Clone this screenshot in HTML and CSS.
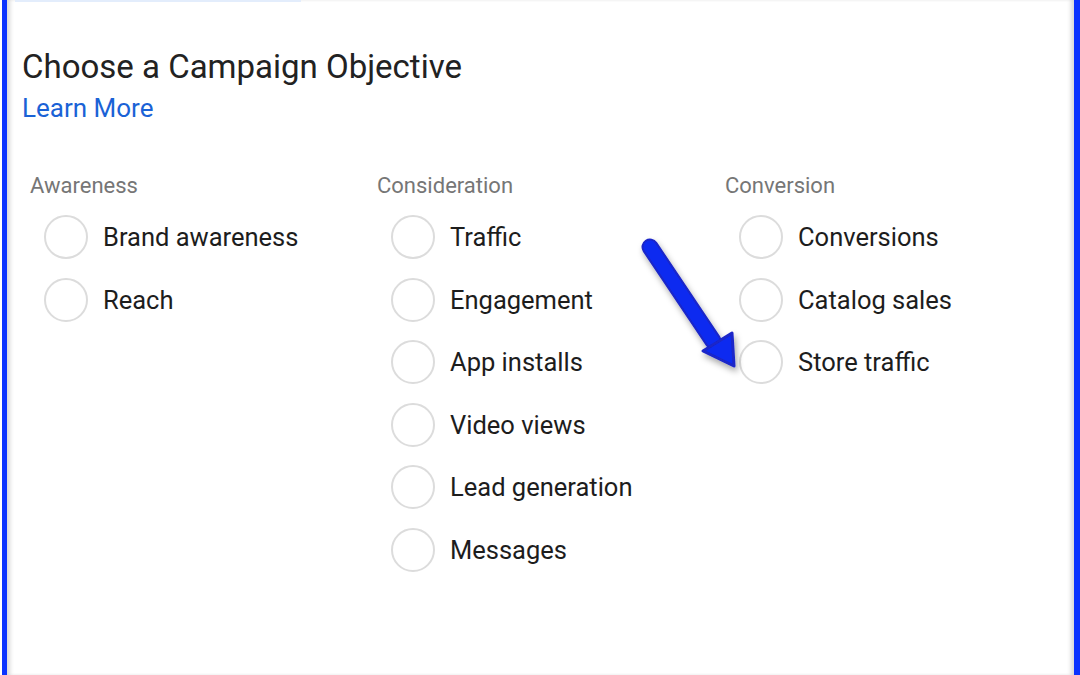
FILE: index.html
```html
<!DOCTYPE html>
<html lang="en">
<head>
    <meta charset="UTF-8">
    <title>Choose a Campaign Objective</title>
    <link rel="stylesheet" href="styles.css">
</head>
<body>
    <div class="frame">
        <div class="top-tab"></div>
        <div class="panel">
            <h2>Choose a Campaign Objective</h2>
            <a class="learn-more" href="#">Learn More</a>

            <div class="columns">
                <div class="column">
                    <div class="column-title">Awareness</div>
                    <label class="option"><span class="radio"></span>Brand awareness</label>
                    <label class="option"><span class="radio"></span>Reach</label>
                </div>
                <div class="column">
                    <div class="column-title">Consideration</div>
                    <label class="option"><span class="radio"></span>Traffic</label>
                    <label class="option"><span class="radio"></span>Engagement</label>
                    <label class="option"><span class="radio"></span>App installs</label>
                    <label class="option"><span class="radio"></span>Video views</label>
                    <label class="option"><span class="radio"></span>Lead generation</label>
                    <label class="option"><span class="radio"></span>Messages</label>
                </div>
                <div class="column">
                    <div class="column-title">Conversion</div>
                    <label class="option"><span class="radio"></span>Conversions</label>
                    <label class="option"><span class="radio"></span>Catalog sales</label>
                    <label class="option"><span class="radio"></span>Store traffic</label>
                </div>
            </div>
        </div>

        <!-- annotation arrow pointing at Store traffic -->
        <svg class="arrow" width="120" height="150" viewBox="0 0 120 150">
            <defs>
                <filter id="shadow" x="-30%" y="-30%" width="160%" height="160%">
                    <feDropShadow dx="2" dy="4" stdDeviation="3" flood-color="#000" flood-opacity="0.35"/>
                </filter>
            </defs>
            <g filter="url(#shadow)">
                <line x1="17" y1="14" x2="80" y2="108" stroke="#1a25c8" stroke-width="17" stroke-linecap="round"/>
                <line x1="17" y1="14" x2="80" y2="108" stroke="#0a2cf0" stroke-width="13" stroke-linecap="round"/>
                <path d="M70 118 L99 100 L101 133 Z" fill="#0a2cf0" stroke="#1a25c8" stroke-width="3" stroke-linejoin="round"/>
            </g>
        </svg>
    </div>
</body>
</html>
```

FILE: styles.css
```css
body {
    margin: 0;
    background: #fff;
    font-family: Roboto, "Liberation Sans", sans-serif;
    color: #1d1d1d;
}
.frame {
    position: relative;
    height: 675px;
    margin-left: 2px;
    border-left: 5px solid #0b33ff;
    border-right: 6px solid #0b33ff;
    box-shadow: inset 5px 0 4px -2px #d8d8d8, inset -5px 0 4px -2px #d8d8d8;
    overflow: hidden;
}
.top-tab {
    height: 2px;
    width: 286px;
    margin-left: 8px;
    background: #e3edfc;
}
.panel {
    padding: 46px 15px 0;
}
h2 {
    margin: 0;
    font-size: 33px;
    font-weight: 400;
    line-height: 38px;
    color: #222;
}
.learn-more {
    display: inline-block;
    margin-top: 7px;
    font-size: 26px;
    line-height: 30px;
    color: #1a62d6;
    text-decoration: none;
}
.columns {
    display: grid;
    grid-template-columns: 347px 348px 1fr;
    margin-top: 50px;
    padding-left: 8px;
}
.column-title {
    font-size: 22px;
    line-height: 26px;
    color: #767676;
    margin-bottom: 7px;
}
.option {
    display: flex;
    align-items: center;
    gap: 15px;
    height: 62.5px;
    padding-left: 14px;
    font-size: 25.5px;
    color: #1d1d1d;
    cursor: pointer;
}
.radio {
    width: 40px;
    height: 40px;
    border: 2px solid #dcdcdc;
    border-radius: 50%;
    flex-shrink: 0;
}
.arrow {
    position: absolute;
    left: 626px;
    top: 233px;
}
```
